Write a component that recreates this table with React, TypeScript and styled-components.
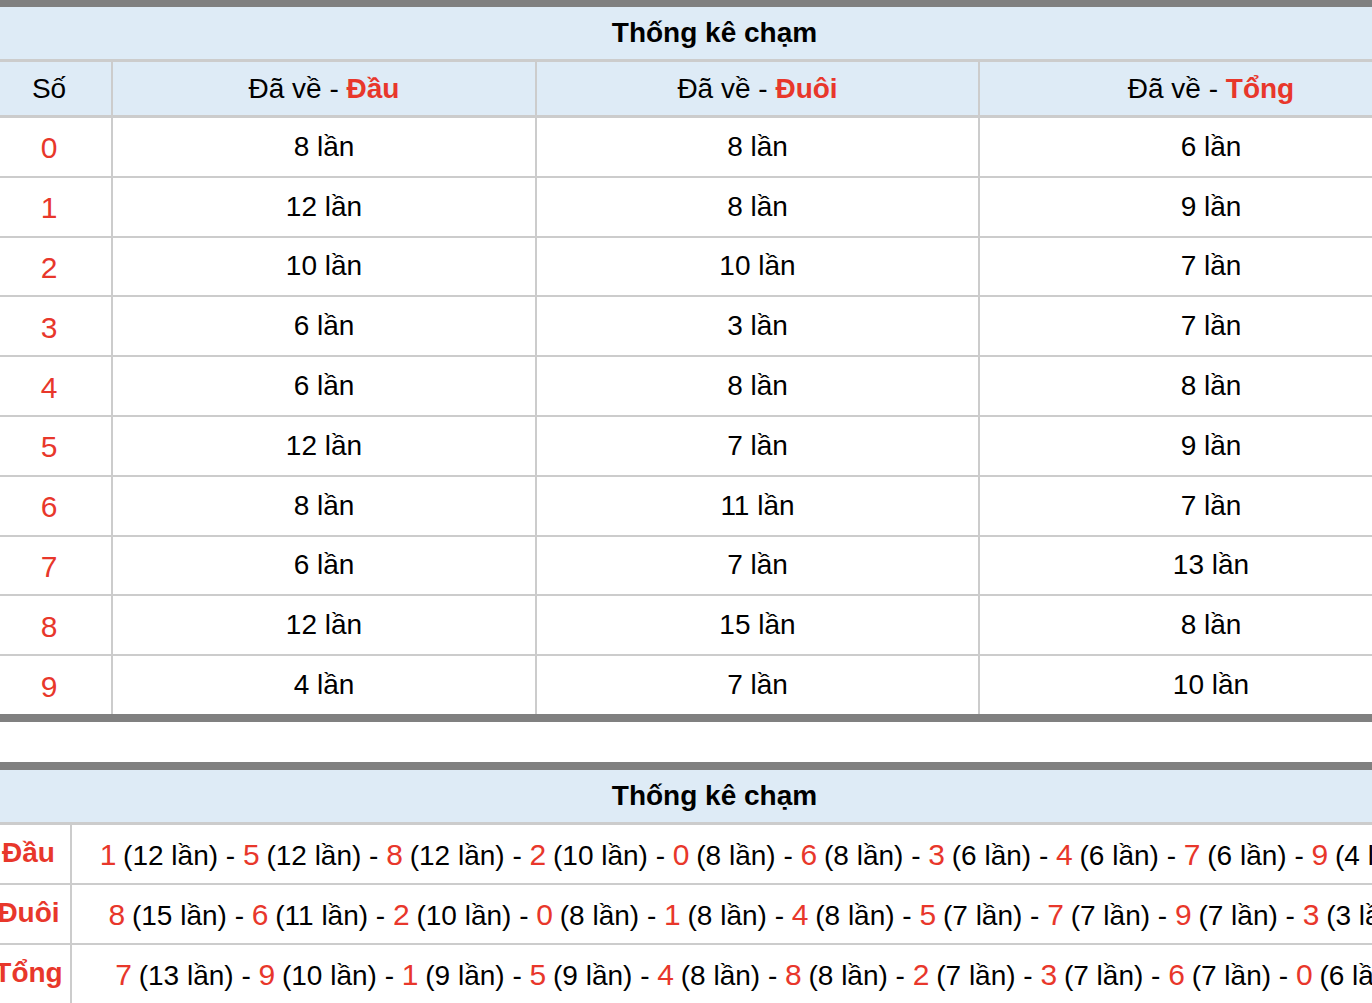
import React from "react";
import styled, { createGlobalStyle } from "styled-components";

// GLOBAL
const GlobalStyle = createGlobalStyle`
  html, body {
    margin: 0;
    padding: 0;
    background: #fff;
    overflow: hidden;
  }
  body {
    font-family: "Liberation Sans", Arial, Helvetica, sans-serif;
    color: #000;
  }
  * {
    box-sizing: border-box;
  }
`;

const RED = "#e8372b";
const HEAD_BG = "#deebf6";
const LINE = "#cccccc";
const FRAME = "#808080";

// STYLED COMPONENTS
const Page = styled.div`
  width: 1455px;
  margin-left: -13px;
  display: flex;
  flex-direction: column;
  gap: 40px;
`;

const Table = styled.div<{ $topWidth: number }>`
  width: 100%;
  border-top: ${(p) => p.$topWidth}px solid ${FRAME};
  border-bottom: 8px solid ${FRAME};
  display: flex;
  flex-direction: column;
`;

const TitleRow = styled.div`
  height: 55px;
  background: ${HEAD_BG};
  border-bottom: 3px solid ${LINE};
  display: flex;
  align-items: center;
  justify-content: center;
  font-size: 28px;
  font-weight: 700;
`;

const Row = styled.div<{ $cols: string; $height: number; $last?: boolean; $head?: boolean }>`
  display: grid;
  grid-template-columns: ${(p) => p.$cols};
  height: ${(p) => p.$height}px;
  background: ${(p) => (p.$head ? HEAD_BG : "#fff")};
  border-bottom: ${(p) => (p.$last ? "none" : p.$head ? `3px solid ${LINE}` : `2px solid ${LINE}`)};
`;

const Cell = styled.div<{ $first?: boolean }>`
  display: flex;
  align-items: center;
  justify-content: center;
  font-size: 28px;
  white-space: nowrap;
  border-left: ${(p) => (p.$first ? "none" : `2px solid ${LINE}`)};
`;

const Accent = styled.span`
  color: ${RED};
  font-weight: 700;
`;

const Num = styled.span`
  color: ${RED};
  font-size: 30px;
  letter-spacing: -1px;
`;

const IndexNum = styled.span`
  color: ${RED};
  font-size: 30px;
  padding-top: 3px;
`;

const LabelCell = styled(Cell)`
  color: ${RED};
  font-weight: 700;
  padding-bottom: 2px;
`;

const ListCell = styled(Cell)`
  overflow: visible;
  padding-top: 2px;
`;

const ListText = styled.span`
  white-space: pre;
`;

// DATA
const counts = [
  [8, 8, 6],
  [12, 8, 9],
  [10, 10, 7],
  [6, 3, 7],
  [6, 8, 8],
  [12, 7, 9],
  [8, 11, 7],
  [6, 7, 13],
  [12, 15, 8],
  [4, 7, 10],
];

const ranks: { label: string; items: [number, number][] }[] = [
  {
    label: "Đầu",
    items: [[1, 12], [5, 12], [8, 12], [2, 10], [0, 8], [6, 8], [3, 6], [4, 6], [7, 6], [9, 4]],
  },
  {
    label: "Đuôi",
    items: [[8, 15], [6, 11], [2, 10], [0, 8], [1, 8], [4, 8], [5, 7], [7, 7], [9, 7], [3, 3]],
  },
  {
    label: "Tổng",
    items: [[7, 13], [9, 10], [1, 9], [5, 9], [4, 8], [8, 8], [2, 7], [3, 7], [6, 7], [0, 6]],
  },
];

const COLS_1 = "124px 424px 443px 464px";
const COLS_2 = "83px 1372px";

export default function App() {
  return (
    <>
      <GlobalStyle />
      <Page>
        <Table $topWidth={7}>
          <TitleRow>Thống kê chạm</TitleRow>
          <Row $cols={COLS_1} $height={56} $head>
            <Cell $first>Số</Cell>
            <Cell>
              <span>
                Đã về - <Accent>Đầu</Accent>
              </span>
            </Cell>
            <Cell>
              <span>
                Đã về - <Accent>Đuôi</Accent>
              </span>
            </Cell>
            <Cell>
              <span>
                Đã về - <Accent>Tổng</Accent>
              </span>
            </Cell>
          </Row>
          {counts.map((row, i) => (
            <Row key={i} $cols={COLS_1} $height={i === 9 ? 57.8 : 59.8} $last={i === 9}>
              <Cell $first>
                <IndexNum>{i}</IndexNum>
              </Cell>
              {row.map((n, j) => (
                <Cell key={j}>{n} lần</Cell>
              ))}
            </Row>
          ))}
        </Table>

        <Table $topWidth={8}>
          <TitleRow>Thống kê chạm</TitleRow>
          {ranks.map((r) => (
            <Row key={r.label} $cols={COLS_2} $height={60}>
              <LabelCell $first>{r.label}</LabelCell>
              <ListCell>
                <ListText>
                  {r.items.map(([d, n], k) => (
                    <React.Fragment key={k}>
                      {k > 0 && " - "}
                      <Num>{d}</Num>
                      {` (${n} lần)`}
                    </React.Fragment>
                  ))}
                </ListText>
              </ListCell>
            </Row>
          ))}
        </Table>
      </Page>
    </>
  );
}
